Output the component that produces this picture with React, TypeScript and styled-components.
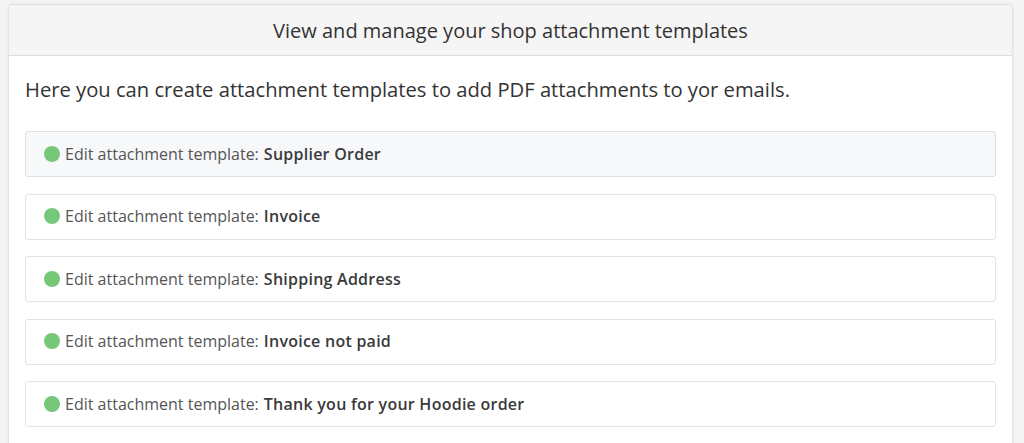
import React from "react";
import styled, { createGlobalStyle } from "styled-components";

const Global = createGlobalStyle`
  html, body { margin: 0; padding: 0; }
  body {
    background: #f4f4f4;
    font-family: "Open Sans", "Noto Sans", sans-serif;
    color: #333;
  }
`;

const Page = styled.div`
  padding: 4px 11px 0 8px;
  height: 443px;
  box-sizing: border-box;
  overflow: hidden;
`;

const Card = styled.section`
  background: #fff;
  border: 1px solid #e2e2e2;
  border-radius: 4px;
  box-shadow: 0 0 3px rgba(0, 0, 0, 0.06);
  overflow: hidden;
`;

const CardHeader = styled.header`
  height: 50px;
  display: flex;
  align-items: center;
  justify-content: center;
  background: #f5f5f5;
  border-bottom: 1px solid #dcdcdc;
  font-size: 20px;
  color: #333;
`;

const CardBody = styled.div`
  padding: 16px 16px 20px;
  display: flex;
  flex-direction: column;
`;

const Intro = styled.p`
  margin: 0 0 25px;
  font-size: 20.2px;
  line-height: 34px;
  color: #333;
`;

const List = styled.ul`
  list-style: none;
  margin: 0;
  padding: 0;
  display: flex;
  flex-direction: column;
  gap: 16.5px;
`;

const Item = styled.li<{ $active?: boolean }>`
  height: 46px;
  box-sizing: border-box;
  display: flex;
  align-items: center;
  gap: 5px;
  padding: 0 18px 1px;
  border: 1px solid ${(p) => (p.$active ? "#dde0e4" : "#e3e3e3")};
  border-radius: 3px;
  background: ${(p) => (p.$active ? "#f7f8fa" : "#fff")};
  font-size: 16px;
  color: #555;
`;

const Dot = styled.span`
  width: 16px;
  height: 16px;
  border-radius: 50%;
  background: #77c779;
  flex: none;
`;

const Name = styled.strong`
  font-weight: 600;
  color: #3a3a3a;
  margin-left: 5px;
  letter-spacing: 0.25px;
`;

const templates = [
  "Supplier Order",
  "Invoice",
  "Shipping Address",
  "Invoice not paid",
  "Thank you for your Hoodie order",
];

export default function App() {
  return (
    <>
      <Global />
      <Page>
        <Card>
          <CardHeader>View and manage your shop attachment templates</CardHeader>
          <CardBody>
            <Intro>
              Here you can create attachment templates to add PDF attachments to yor emails.
            </Intro>
            <List>
              {templates.map((t, i) => (
                <Item key={t} $active={i === 0}>
                  <Dot />
                  <span>
                    Edit attachment template:<Name>{t}</Name>
                  </span>
                </Item>
              ))}
            </List>
          </CardBody>
        </Card>
      </Page>
    </>
  );
}
